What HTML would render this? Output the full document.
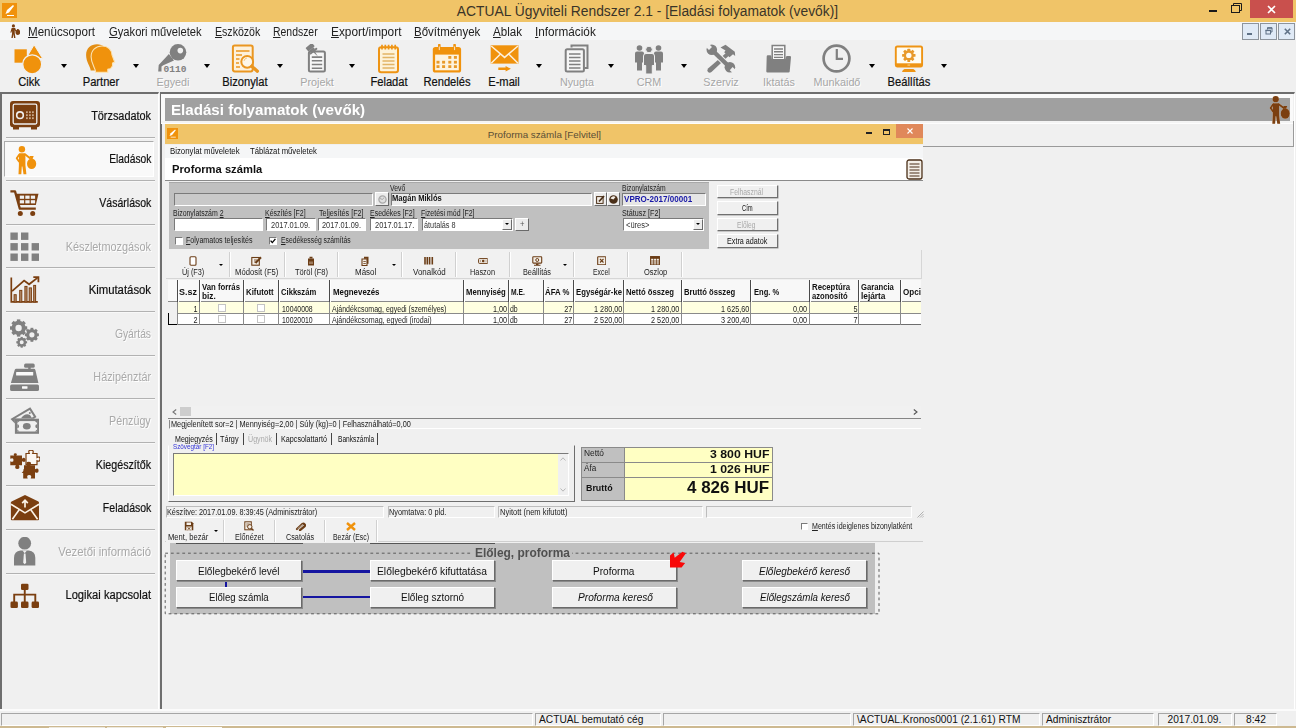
<!DOCTYPE html>
<html><head><meta charset="utf-8"><title>ACTUAL</title>
<style>
*{box-sizing:border-box;margin:0;padding:0}
html,body{width:1296px;height:728px;overflow:hidden;background:#f0f0f0;font-family:"Liberation Sans",sans-serif;color:#000}
.a{position:absolute;white-space:nowrap}
.sx{display:inline-block;transform:scaleX(.91);transform-origin:0 50%}
#title{left:0;top:0;width:1296px;height:21.6px;background:#f0c468}
#title .t{left:0;width:1296px;top:0px;text-align:center;font-size:15.4px;color:#3a3428;line-height:21px;transform:translateX(-.5px) scaleX(.898)}
#menu{left:0;top:21.5px;width:1296px;height:18px;background:#f5f6f7;z-index:2}
#menu span{position:absolute;top:3px;font-size:12.3px;line-height:15px;color:#222;transform:scaleX(.91);transform-origin:0 50%}
#tb{left:0;top:39px;width:1296px;height:53px;background:#f0f0f0}
.tl{position:absolute;top:36px;font-size:12px;line-height:14px;text-align:center;transform:translateX(-50%) scaleX(.93);color:#111;-webkit-text-stroke:.2px #111}
.tl.d{font-size:11.6px;color:#a6a6a6;-webkit-text-stroke:0;text-shadow:1px 1px 0 #fff}
.arr{position:absolute;top:25.2px;width:0;height:0;margin-left:-.3px;border-left:3.8px solid transparent;border-right:3.8px solid transparent;border-top:4.3px solid #000}
.ico{position:absolute;top:5px;width:30px;height:30px}
#side{left:0;top:92px;width:159px;height:616.5px;background:#f0f0f0;border-top:2px solid #6e6e6e;border-left:2px solid #6e6e6e;border-right:1px solid #fff}
.sl{position:absolute;right:1145px;font-size:12px;line-height:16px;color:#111;transform:scaleX(.90);transform-origin:100% 50%;-webkit-text-stroke:.2px #111}
.sl.d{color:#a9a9a9;-webkit-text-stroke:0;text-shadow:1px 1px 0 #fff}
.sep{position:absolute;left:6px;width:149px;height:2px;border-top:1px solid #b2b2b2;border-bottom:1px solid #f8f8f8}
.sic{position:absolute;left:10px;width:30px;height:30px}
#main{left:159.5px;top:92px;width:1135px;height:616.5px;border-right:1px solid #fff;background:#f0f0f0;border-top:2px solid #6e6e6e;border-left:2px solid #6e6e6e}
#hdr{left:165.1px;top:97.9px;width:1124.7px;height:23px;background:#a0a0a0}
#hdr .t{left:6.4px;top:.7px;font-size:14.6px;font-weight:bold;color:#fff;line-height:22.6px;transform:scaleX(1.036);transform-origin:0 50%}
#status{left:0;top:712px;width:1296px;height:14px}
.sp{position:absolute;top:.6px;height:13.4px;border:1px solid #a6a6a6;border-right-color:#fff;border-bottom-color:#fff;font-size:10.2px;line-height:11.6px;padding-left:3px;color:#111}
.sp span{display:inline-block;transform:scaleX(1.0);transform-origin:0 50%}
.mdi{top:1.7px;width:16.5px;height:16.5px;background:#e0eaf6;border:1px solid #8d949c}
#botline{left:0;top:725.5px;width:1296px;height:2.5px;background:#cdb991}
</style></head><body>
<!-- TITLE BAR -->
<div id="title" class="a">
  <div class="a t">ACTUAL Ügyviteli Rendszer 2.1 - [Eladási folyamatok (vevők)]</div>
  <svg class="a" style="left:2px;top:3px" width="15" height="15" viewBox="0 0 15 15"><rect width="15" height="15" fill="#f0920c"/><path d="M3.5 11 L5 7 L11 2 L12 3 L7 9.5 Z" fill="#fff"/><path d="M5 12.5 h7" stroke="#fff" stroke-width="1"/></svg>
  <div class="a" style="left:1209px;top:10px;width:8px;height:2px;background:#1a1a1a"></div>
  <svg class="a" style="left:1231px;top:3px" width="11" height="10" viewBox="0 0 11 10"><path d="M2.5 2.5 V0.5 H10.5 V7.5 H8.5" fill="none" stroke="#1a1a1a"/><rect x="0.5" y="2.5" width="8" height="7" fill="none" stroke="#1a1a1a"/></svg>
  <div class="a" style="left:1250px;top:0;width:43px;height:18px;background:#c9504d"></div>
  <svg class="a" style="left:1267px;top:5px" width="9" height="9" viewBox="0 0 9 9"><path d="M1 1 L8 8 M8 1 L1 8" stroke="#fff" stroke-width="1.6"/></svg>
</div>
<!-- MENU -->
<div id="menu" class="a">
  <svg class="a" style="left:8.600px;top:2px" width="11.500" height="14.200" viewBox="0 0 13 16"><g fill="#7b3f10"><circle cx="5" cy="2.2" r="1.8"/><path d="M3 4.5h4l1.2 3.5l-1 .5l-.7-1.6v3.6l.8 5.3h-1.6l-.7-4.6l-.7 4.6h-1.6l.8-5.3v-3l-1 2.5l-1-.4z"/><ellipse cx="10" cy="9.3" rx="2.6" ry="3"/><path d="M9 5.5h2l-.4 1.5h-1.2z"/></g></svg>
  <span style="left:28px;transform:scaleX(0.942)"><u>M</u>enücsoport</span>
  <span style="left:109px;transform:scaleX(0.91)"><u>G</u>yakori műveletek</span>
  <span style="left:215px;transform:scaleX(0.86)"><u>E</u>szközök</span>
  <span style="left:273px;transform:scaleX(0.848)"><u>R</u>endszer</span>
  <span style="left:331px;transform:scaleX(0.963)"><u>E</u>xport/import</span>
  <span style="left:414px;transform:scaleX(0.933)"><u>B</u>ővítmények</span>
  <span style="left:493px;transform:scaleX(0.942)"><u>A</u>blak</span>
  <span style="left:535px;transform:scaleX(0.956)"><u>I</u>nformációk</span>
  <div class="a mdi" style="left:1242.200px"></div><div class="a mdi" style="left:1260.300px"></div><div class="a mdi" style="left:1278.200px"></div>
  <div class="a" style="left:1246.600px;top:11.500px;width:5.600px;height:1.900px;background:#5f7186"></div>
  <svg class="a" style="left:1264.500px;top:5.500px" width="8" height="8" viewBox="0 0 8 8"><path d="M2.500 2.500 V1 H7 V5 H5.500" fill="none" stroke="#5f7186" stroke-width="1"/><path d="M2.200 .9 H7.200" stroke="#5f7186" stroke-width="1.400"/><rect x="1" y="3.500" width="4.500" height="3.500" fill="none" stroke="#5f7186" stroke-width="1"/><path d="M.5 3.400 H6" stroke="#5f7186" stroke-width="1.400"/></svg>
  <svg class="a" style="left:1283.500px;top:6.800px" width="7" height="7" viewBox="0 0 7 7"><path d="M.8 .8 L6.200 6.200 M6.200 .8 L.8 6.200" stroke="#5f7186" stroke-width="1.600"/></svg>
</div>
<!-- TOOLBAR -->
<div id="tb" class="a">
  <!-- Cikk -->
  <svg class="ico" style="left:14px" viewBox="0 0 30 30"><g fill="#f0920c"><rect x=".5" y="5.300" width="12.300" height="13.400"/><path d="M20.100 .8 L28.600 14.500 H12 Z" stroke="#f0f0f0" stroke-width="1"/><circle cx="18.200" cy="20.300" r="9.500" stroke="#f0f0f0" stroke-width="1.300"/></g></svg>
  <div class="tl" style="left:29px">Cikk</div><div class="arr" style="left:61px"></div>
  <!-- Partner -->
  <svg class="ico" style="left:86px" viewBox="0 0 30 30"><path d="M9.700 28.400 C9.500 24 5.100 20 5.100 12.700 C5.100 6 10 2 16 2 C22 2 26 6 26 11 L28.700 18 L26.500 19.200 L26.500 22 L24.600 24.600 C23.500 25.300 21.800 25 21.800 25.200 L21.800 28.400 Z" fill="#e38d12" transform="translate(-5 -1.800)"/><path d="M9.700 28.400 C9.500 24 5.100 20 5.100 12.700 C5.100 6 10 2 16 2 C22 2 26 6 26 11 L28.700 18 L26.500 19.200 L26.500 22 L24.600 24.600 C23.500 25.300 21.800 25 21.800 25.200 L21.800 28.400 Z" fill="#f0920c" stroke="#fbe3b5" stroke-width="1.100"/></svg>
  <div class="tl" style="left:101px">Partner</div><div class="arr" style="left:133px"></div>
  <!-- Egyedi -->
  <svg class="ico" style="left:157px" viewBox="0 0 30 30"><g fill="#808080"><circle cx="21" cy="8.300" r="8.300"/><path d="M11.900 9.900 L1.700 21 L1.200 27.500 L4.500 27.500 L4.500 22.500 L6.300 21.300 L17 16.500 Z"/></g><circle cx="23.300" cy="6.600" r="2.800" fill="#f0f0f0"/><text x="6.600" y="27.900" font-family="Liberation Mono,monospace" font-size="9.800" font-weight="bold" fill="#808080" textLength="23" lengthAdjust="spacingAndGlyphs">0110</text></svg>
  <div class="tl d" style="left:173px">Egyedi</div><div class="arr" style="left:204.500px"></div>
  <!-- Bizonylat -->
  <svg class="ico" style="left:230px" viewBox="0 0 30 30"><rect x="2.900" y="1.600" width="19.800" height="25.800" rx="1.800" fill="#fdf1dc" stroke="#ea9620" stroke-width="2"/><path d="M6 7h13.500 M6 11h6 M6 15h3.500 M6 19h3 M6 23h4" stroke="#ea9620" stroke-width="1.500"/><circle cx="17.200" cy="17.800" r="5.900" fill="#fdf6e8" stroke="#ea9620" stroke-width="2"/><path d="M14 17 a3.500 3.500 0 0 1 3-3" fill="none" stroke="#f3c98a" stroke-width="1"/><path d="M21.800 22.300 L27.400 27.300" stroke="#ea9620" stroke-width="3.200" stroke-linecap="round"/></svg>
  <div class="tl" style="left:245px">Bizonylat</div><div class="arr" style="left:277px"></div>
  <!-- Projekt -->
  <svg class="ico" style="left:302px" viewBox="0 0 30 30"><rect x="6.900" y="7.600" width="16" height="19.800" rx="1.500" fill="#f7f7f7" stroke="#808080" stroke-width="2"/><path d="M9.800 13.100h10.400 M9.800 16.800h10.400 M9.800 20.500h10.400 M9.800 24.200h10.400" stroke="#808080" stroke-width="1.600"/><g fill="#808080" transform="rotate(-40 10.500 6)"><rect x="6.300" y="0" width="8.400" height="4.600" rx="1"/><rect x="8" y="4.400" width="5" height="2.400"/><rect x="5.800" y="6.500" width="9.400" height="2" rx=".9"/><path d="M9.600 8.300 L11.400 8.300 L10.500 14.500 Z"/></g></svg>
  <div class="tl d" style="left:317px">Projekt</div><div class="arr" style="left:349px"></div>
  <!-- Feladat -->
  <svg class="ico" style="left:374px" viewBox="0 0 30 30"><rect x="5" y="3.300" width="19" height="25" rx="2.200" fill="#fdf3da" stroke="#ee9414" stroke-width="2"/><path d="M8.500 10h12 M8.500 13.500h12 M8.500 17h12 M8.500 20.500h12 M8.500 24h12" stroke="#e2b566" stroke-width="1.300"/><path d="M8 .8v4.800 M11.300 .8v4.800 M14.600 .8v4.800 M17.900 .8v4.800 M21.200 .8v4.800" stroke="#ee9414" stroke-width="1.700"/></svg>
  <div class="tl" style="left:389px">Feladat</div>
  <!-- Rendeles -->
  <svg class="ico" style="left:432px" viewBox="0 0 30 30"><rect x=".8" y="3" width="28.300" height="25.600" rx="2.600" fill="#f0920c"/><rect x="3.100" y="10.600" width="23.700" height="15.700" fill="#fdf3e0"/><g fill="#e89a2a"><rect x="16.3" y="12" width="3" height="2.800"/><rect x="21.9" y="12" width="3" height="2.800"/><rect x="4.5" y="16.8" width="3" height="2.800"/><rect x="10.1" y="16.8" width="3" height="2.800"/><rect x="16.3" y="16.8" width="3" height="2.800"/><rect x="21.9" y="16.8" width="3" height="2.800"/><rect x="4.5" y="21.2" width="3" height="2.800"/><rect x="10.1" y="21.2" width="3" height="2.800"/><rect x="16.3" y="21.2" width="3" height="2.800"/><rect x="21.9" y="21.2" width="3" height="2.800"/></g><path d="M7.300 1v5.500 M22.600 1v5.500" stroke="#f0920c" stroke-width="2.600" stroke-linecap="round"/><path d="M7.300 2.500v3.600 M22.600 2.500v3.600" stroke="#fdf0dc" stroke-width=".9"/></svg>
  <div class="tl" style="left:447px">Rendelés</div>
  <!-- Email -->
  <svg class="ico" style="left:489px" viewBox="0 0 30 30"><rect x="1.700" y="1.300" width="27.800" height="18.300" fill="#f0920c"/><path d="M2.200 2 L15.600 13.400 L29 2 M2.200 19.200 L11.500 10 M29 19.200 L19.700 10" fill="none" stroke="#fdf0dc" stroke-width="1.500"/><path d="M9.300 23.600h7.300v-1.500l5.300 2.750l-5.300 2.750v-1.500h-7.300z" fill="#f0920c"/></svg>
  <div class="tl" style="left:504px">E-mail</div><div class="arr" style="left:536px"></div>
  <!-- Nyugta -->
  <svg class="ico" style="left:562px" viewBox="0 0 30 30"><path d="M9.500 3.500 V1.500 H25.500 V24 H22.500" fill="none" stroke="#808080" stroke-width="2"/><rect x="3.700" y="5.300" width="18.200" height="22.300" rx="1.500" fill="#f6f6f6" stroke="#808080" stroke-width="2"/><path d="M7 10h11.500 M7 13.500h11.500 M7 17h11.500 M7 20.500h11.500 M7 24h11.500" stroke="#808080" stroke-width="1.500"/></svg>
  <div class="tl d" style="left:577px">Nyugta</div><div class="arr" style="left:608.500px"></div>
  <!-- CRM -->
  <svg class="ico" style="left:634px" viewBox="0 0 30 30"><g fill="#808080"><circle cx="5.500" cy="4" r="2.800"/><circle cx="24.500" cy="4" r="2.800"/><path d="M1 9.500 q0-2 2-2 h5 q2 0 2 2 v9 h-2 v8 h-5 v-8 h-2z"/><path d="M20 9.500 q0-2 2-2 h5 q2 0 2 2 v9 h-2 v8 h-5 v-8 h-2z"/><circle cx="15" cy="5.500" r="3.300" stroke="#f0f0f0" stroke-width="1"/><path d="M9.500 12 q0-2.500 2.500-2.500 h6 q2.500 0 2.500 2.500 v9.500 h-2.200 v8.500 h-6.600 v-8.500 h-2.200z" stroke="#f0f0f0" stroke-width="1"/></g></svg>
  <div class="tl d" style="left:649px">CRM</div><div class="arr" style="left:681px"></div>
  <!-- Szerviz -->
  <svg class="ico" style="left:706px" viewBox="0 0 30 30"><g fill="#808080"><path d="M20 9 L23 11.500 L5.500 28 Q3.500 29.500 2 28 Q.5 26.500 2 24.500 Z"/><path d="M14.500 3.500 L19.500 .8 L28.800 7.800 L29.200 12 L27 10.300 L23.500 13.200 L18.200 8.200 L19.500 6.500 Z"/></g><path d="M6 6 L24 23.500" stroke="#f0f0f0" stroke-width="6.400"/><path d="M6 6 L24 23.500" stroke="#808080" stroke-width="4.400"/><g fill="#808080"><circle cx="5.800" cy="5.700" r="5.300"/><circle cx="23.900" cy="23.300" r="5.300"/></g><path d="M4.500 4.500 L-1 -1 M25.200 24.600 L31 30" stroke="#f0f0f0" stroke-width="4.200"/></svg>
  <div class="tl d" style="left:721px">Szerviz</div>
  <!-- Iktatas -->
  <svg class="ico" style="left:764px" viewBox="0 0 30 30"><rect x="8.200" y="1.500" width="12.600" height="15" fill="#f7f7f7" stroke="#808080" stroke-width="1.500"/><path d="M10 5h9 M10 7.800h9 M10 10.600h9 M10 13.400h9" stroke="#808080" stroke-width="1.400"/><path d="M2.700 12.500 q0-1.200 1.200-1.200 h2.300 q1 0 1.200 1.200 l.3 2.500 h13.800 l.4-2 q.2-1 1.200-1 h2.800 q1.200 0 1.100 1.200 l-1.300 14.400 q-.1 1-1.200 1 h-21 q-1.100 0-1.200-1z" fill="#808080"/></svg>
  <div class="tl d" style="left:779px">Iktatás</div>
  <!-- Munkaido -->
  <svg class="ico" style="left:822px" viewBox="0 0 30 30"><circle cx="14.500" cy="14.500" r="12.900" fill="none" stroke="#808080" stroke-width="2.700"/><path d="M14.800 5 V14.800 H21" fill="none" stroke="#808080" stroke-width="2.200"/></svg>
  <div class="tl d" style="left:837px">Munkaidő</div><div class="arr" style="left:869px"></div>
  <!-- Beallitas -->
  <svg class="ico" style="left:894px" viewBox="0 0 30 30"><rect x="1.800" y="2.450" width="26.300" height="20" rx="1.600" fill="#fffcf2" stroke="#ee9414" stroke-width="1.900"/><rect x="1.800" y="19.300" width="26.300" height="3.600" fill="#ee9414"/><rect x="13.500" y="20.600" width="2.600" height=".9" fill="#fbd9a0"/><path d="M10.500 24.900 h8.800 q2.300 1.200 2.500 3 h-13.800 q.2-1.800 2.500-3z" fill="#ee9414"/><g transform="translate(14.800 11.400)" fill="#e89a2a"><rect x="-1.400" y="-6.700" width="2.800" height="3" rx=".5" transform="rotate(0)"/><rect x="-1.400" y="-6.700" width="2.800" height="3" rx=".5" transform="rotate(45)"/><rect x="-1.400" y="-6.700" width="2.800" height="3" rx=".5" transform="rotate(90)"/><rect x="-1.400" y="-6.700" width="2.800" height="3" rx=".5" transform="rotate(135)"/><rect x="-1.400" y="-6.700" width="2.800" height="3" rx=".5" transform="rotate(180)"/><rect x="-1.400" y="-6.700" width="2.800" height="3" rx=".5" transform="rotate(225)"/><rect x="-1.400" y="-6.700" width="2.800" height="3" rx=".5" transform="rotate(270)"/><rect x="-1.400" y="-6.700" width="2.800" height="3" rx=".5" transform="rotate(315)"/><circle r="5.100"/><circle r="2.700" fill="#fffcf2"/></g></svg>
  <div class="tl" style="left:909px">Beállítás</div><div class="arr" style="left:941px"></div>
</div>
<!-- SIDEBAR -->
<div id="side" class="a"></div>
<div class="a" style="left:4px;top:141px;width:150px;height:36px;background:#f9f9f9;border:1px solid #ababab;border-right-color:#fff;border-bottom-color:#fff"></div>
<svg class="sic" style="top:101.0px" viewBox="0 0 30 30"><rect x="0" y="0" width="30" height="26.200" rx="3" fill="#7b3f10"/><rect x="3.200" y="3.200" width="23.600" height="19.800" rx="1.500" fill="none" stroke="#f0f0f0" stroke-width="1.300"/><circle cx="10" cy="14.200" r="3.300" fill="none" stroke="#f0f0f0" stroke-width="1.600"/><g fill="#c9a98a"><rect x="16" y="10.300" width="1.800" height="1.800"/><rect x="19" y="10.300" width="1.800" height="1.800"/><rect x="22" y="10.300" width="1.800" height="1.800"/><rect x="16" y="13.300" width="1.800" height="1.800"/><rect x="19" y="13.300" width="1.800" height="1.800"/><rect x="22" y="13.300" width="1.800" height="1.800"/><rect x="16" y="16.300" width="1.800" height="1.800"/><rect x="19" y="16.300" width="1.800" height="1.800"/><rect x="22" y="16.300" width="1.800" height="1.800"/></g><path d="M3 26h6v2.600h-6z M21 26h6v2.600h-6z" fill="#7b3f10"/></svg>
<div class="sl" style="top:107.7px;transform:scaleX(0.907)">Törzsadatok</div>
<div class="sep" style="top:136.5px"></div>
<svg class="sic" style="top:144.6px" viewBox="0 0 30 30"><g fill="#f0920c"><circle cx="11.900" cy="4.200" r="3.200"/><path d="M9.900 8.300 H14.300 Q15.400 8.300 15.400 9.500 V20 L16.400 29.300 H13.500 L12.400 21.500 H11.800 L11.300 29.300 H8.500 L8.900 20 V9.500 Q8.900 8.300 9.900 8.300 Z"/><path d="M9.300 9.400 L6.700 13.200 L9 16.600" fill="none" stroke="#f0920c" stroke-width="1.800" stroke-linejoin="round" stroke-linecap="round"/><path d="M15 9.300 L20 13.200" fill="none" stroke="#f0920c" stroke-width="1.900" stroke-linecap="round"/><ellipse cx="21.600" cy="18.800" rx="4.600" ry="5.300"/><path d="M19.500 11.100 h4.200 l-1.100 3 h-2 z"/></g></svg>
<div class="sl" style="top:151.3px;transform:scaleX(0.853)">Eladások</div>
<div class="sep" style="top:180.1px"></div>
<svg class="sic" style="top:188.2px" viewBox="0 0 30 30"><path d="M.4 3.400 h4.600 l4.800 17.200 h16" fill="none" stroke="#7b3f10" stroke-width="2.300" stroke-linejoin="round"/><path d="M5.800 5.800 h22.700 l-2.700 11.200 h-16.800z" fill="#7b3f10"/><g fill="#f0f0f0"><rect x="9.8" y="7.6" width="4.300" height="3.200"/><rect x="15.3" y="7.6" width="4.300" height="3.200"/><rect x="20.8" y="7.6" width="4.300" height="3.200"/><rect x="9.8" y="12.2" width="4.300" height="3.200"/><rect x="15.3" y="12.2" width="4.300" height="3.200"/><rect x="20.8" y="12.2" width="4.300" height="3.200"/></g><circle cx="10.300" cy="25.600" r="2.500" fill="#7b3f10"/><circle cx="22.700" cy="25.600" r="2.500" fill="#7b3f10"/></svg>
<div class="sl" style="top:194.9px;transform:scaleX(0.876)">Vásárlások</div>
<div class="sep" style="top:223.7px"></div>
<svg class="sic" style="top:231.8px" viewBox="0 0 30 30"><g fill="#808080"><rect x="0.4" y="0.5" width="7.400" height="7.400"/><rect x="11" y="0.5" width="7.400" height="7.400"/><rect x="0.4" y="11.1" width="7.400" height="7.400"/><rect x="11" y="11.1" width="7.400" height="7.400"/><rect x="21.6" y="11.1" width="7.400" height="7.400"/><rect x="0.4" y="21.5" width="7.400" height="7.400"/><rect x="11" y="21.5" width="7.400" height="7.400"/><rect x="21.6" y="21.5" width="7.400" height="7.400"/></g></svg>
<div class="sl d" style="top:238.5px;transform:scaleX(0.908)">Készletmozgások</div>
<div class="sep" style="top:267.3px"></div>
<svg class="sic" style="top:275.4px" viewBox="0 0 30 30"><g fill="none" stroke="#7b3f10"><path d="M1.300 2.500 V26.800 H27.800" stroke-width="1.700"/><rect x="4.1" y="19.7" width="2.1" height="7.3" fill="#b79070" stroke="#7b3f10" stroke-width="1"/><rect x="9.7" y="15.4" width="2.1" height="11.6" fill="#b79070" stroke="#7b3f10" stroke-width="1"/><rect x="14.9" y="11.4" width="2.1" height="15.6" fill="#b79070" stroke="#7b3f10" stroke-width="1"/><rect x="19.2" y="12.9" width="2.2" height="14.1" fill="#b79070" stroke="#7b3f10" stroke-width="1"/><rect x="23.7" y="10.4" width="1.9" height="16.6" fill="#b79070" stroke="#7b3f10" stroke-width="1"/><path d="M2.100 16.100 L14.100 5.600 L19.100 9.300 L27.400 2.900" stroke-width="1.800"/><path d="M23.300 2.200 H28.400 V7.200" stroke-width="1.800"/></g></svg>
<div class="sl" style="top:282.1px;transform:scaleX(0.945)">Kimutatások</div>
<div class="sep" style="top:310.9px"></div>
<svg class="sic" style="top:319.0px" viewBox="0 0 30 30"><g transform="translate(8.6 9)"><circle r="5.16" fill="none" stroke="#808080" stroke-width="3.96"/><rect x="-1.72" y="-8.60" width="3.44" height="3.01" fill="#808080" transform="rotate(0.0)"/><rect x="-1.72" y="-8.60" width="3.44" height="3.01" fill="#808080" transform="rotate(45.0)"/><rect x="-1.72" y="-8.60" width="3.44" height="3.01" fill="#808080" transform="rotate(90.0)"/><rect x="-1.72" y="-8.60" width="3.44" height="3.01" fill="#808080" transform="rotate(135.0)"/><rect x="-1.72" y="-8.60" width="3.44" height="3.01" fill="#808080" transform="rotate(180.0)"/><rect x="-1.72" y="-8.60" width="3.44" height="3.01" fill="#808080" transform="rotate(225.0)"/><rect x="-1.72" y="-8.60" width="3.44" height="3.01" fill="#808080" transform="rotate(270.0)"/><rect x="-1.72" y="-8.60" width="3.44" height="3.01" fill="#808080" transform="rotate(315.0)"/></g><g transform="translate(21.9 15.8)"><circle r="4.20" fill="none" stroke="#808080" stroke-width="3.22"/><rect x="-1.40" y="-7.00" width="2.80" height="2.45" fill="#808080" transform="rotate(0.0)"/><rect x="-1.40" y="-7.00" width="2.80" height="2.45" fill="#808080" transform="rotate(45.0)"/><rect x="-1.40" y="-7.00" width="2.80" height="2.45" fill="#808080" transform="rotate(90.0)"/><rect x="-1.40" y="-7.00" width="2.80" height="2.45" fill="#808080" transform="rotate(135.0)"/><rect x="-1.40" y="-7.00" width="2.80" height="2.45" fill="#808080" transform="rotate(180.0)"/><rect x="-1.40" y="-7.00" width="2.80" height="2.45" fill="#808080" transform="rotate(225.0)"/><rect x="-1.40" y="-7.00" width="2.80" height="2.45" fill="#808080" transform="rotate(270.0)"/><rect x="-1.40" y="-7.00" width="2.80" height="2.45" fill="#808080" transform="rotate(315.0)"/></g><g transform="translate(11.7 23.3)"><circle r="3.24" fill="none" stroke="#808080" stroke-width="2.48"/><rect x="-1.08" y="-5.40" width="2.16" height="1.89" fill="#808080" transform="rotate(0.0)"/><rect x="-1.08" y="-5.40" width="2.16" height="1.89" fill="#808080" transform="rotate(45.0)"/><rect x="-1.08" y="-5.40" width="2.16" height="1.89" fill="#808080" transform="rotate(90.0)"/><rect x="-1.08" y="-5.40" width="2.16" height="1.89" fill="#808080" transform="rotate(135.0)"/><rect x="-1.08" y="-5.40" width="2.16" height="1.89" fill="#808080" transform="rotate(180.0)"/><rect x="-1.08" y="-5.40" width="2.16" height="1.89" fill="#808080" transform="rotate(225.0)"/><rect x="-1.08" y="-5.40" width="2.16" height="1.89" fill="#808080" transform="rotate(270.0)"/><rect x="-1.08" y="-5.40" width="2.16" height="1.89" fill="#808080" transform="rotate(315.0)"/></g></svg>
<div class="sl d" style="top:325.7px;transform:scaleX(0.859)">Gyártás</div>
<div class="sep" style="top:354.5px"></div>
<svg class="sic" style="top:362.6px" viewBox="0 0 30 30"><g fill="#808080"><rect x="14.100" y=".6" width="10.600" height="4.200" rx="1.500"/><rect x="18.200" y="4" width="2.500" height="3"/><path d="M6.300 5.800 h17.600 q1.200 0 1.500 1.200 l3 13 h-27.500 l3.800-13 q.4-1.200 1.600-1.200z"/><rect x=".1" y="21.600" width="28.900" height="6.400" rx="1.600"/></g><rect x="6.100" y="8.900" width="17.100" height="3.700" rx=".6" fill="#fafafa"/><rect x="12" y="23.200" width="5.500" height="2.500" rx=".4" fill="#fafafa"/></svg>
<div class="sl d" style="top:369.3px;transform:scaleX(0.901)">Házipénztár</div>
<div class="sep" style="top:398.1px"></div>
<svg class="sic" style="top:406.2px" viewBox="0 0 30 30"><g fill="#808080"><path d="M.5 12.900 L20.300 1.200 L26.500 11.100 L24 12.700 H4.900 V17.500 Z"/><path d="M4.900 12.700 h24.100 v15.100 h-24.100z"/></g><path d="M5.500 12.200 L19.600 3.900 L23.800 10.600 L21 12.200 Z" fill="#f0f0f0"/><path d="M11 12.200 q4-5.500 9-3.300 l2 3.300z" fill="#808080"/><circle cx="19.800" cy="6.900" r="1" fill="#808080"/><path d="M7.300 15.100 h19.800 v10.400 h-19.800z" fill="#f0f0f0"/><g fill="#808080"><path d="M7.300 18.300 q1.800 0 1.800 2 q0 2-1.800 2z M27.100 18.300 q-1.800 0-1.800 2 q0 2 1.800 2z"/></g><ellipse cx="16.800" cy="20.300" rx="3.900" ry="3.300" fill="#808080"/><path d="M7.300 15.100 h2.200 l-2.200 2z M27.100 15.100 h-2.200 l2.200 2z M7.300 25.500 h2.200 l-2.200-2z M27.100 25.500 h-2.200 l2.200-2z" fill="#808080"/></svg>
<div class="sl d" style="top:412.9px;transform:scaleX(0.891)">Pénzügy</div>
<div class="sep" style="top:441.7px"></div>
<svg class="sic" style="top:449.8px" viewBox="0 0 30 30"><path d="M16 3.500 h3.300 q-1.600-3.300 1.700-3.300 q3.300 0 1.700 3.300 h4.300 v4 q3-1.500 3 1.600 q0 3.100-3 1.600 v4 h-11 z" fill="#fbf7f2" stroke="#7b3f10" stroke-width="1.200"/><g fill="#7b3f10"><path d="M.3 5.500 h4 q-1.500-1.800 1-2.200 q2.500 .4 1 2.200 h5.700 v3.200 q2.500-2 3.600 .8 q.3 3.600-3.600 1.800 v4 h-3.200 q1.800 3.600-1.500 3.600 q-3.300 0-1.500-3.600 h-5.500 v-4 q3.200 1.600 3.200-1.300 q0-2.900-3.200-1.300z"/><path d="M14 15.200 h3 q-1.800-3.400 1.700-3.400 q3.500 0 1.700 3.400 h4.600 v4 q3.600-1.800 3.600 1.500 q0 3.300-3.600 1.500 v6.300 h-4.300 q1.600-3.600-1.500-3.600 q-3.100 0-1.500 3.600 h-4.500 v-5.500 h-1.500 q2.500-1.500 1.700-3.800 h.6z"/></g></svg>
<div class="sl" style="top:456.5px;transform:scaleX(0.890)">Kiegészítők</div>
<div class="sep" style="top:485.3px"></div>
<svg class="sic" style="top:493.4px" viewBox="0 0 30 30"><path d="M.9 9.600 Q.9 8.800 1.600 8.400 L15 1.900 L28.400 8.400 Q29 8.800 29 9.600 V26.300 Q29 27.300 28 27.300 H1.900 Q.9 27.300 .9 26.300z" fill="#7b3f10"/><path d="M1 11.200 L15 19.900 L29 11.200 M2.400 26.300 L9 17 M27.600 26.300 L21 17" fill="none" stroke="#fbf3e6" stroke-width="1.600"/><path d="M15 14.500 V8 M12.200 10.200 L15 7.200 L17.800 10.200" fill="none" stroke="#fbf3e6" stroke-width="1.700"/></svg>
<div class="sl" style="top:500.1px;transform:scaleX(0.876)">Feladások</div>
<div class="sep" style="top:528.9px"></div>
<svg class="sic" style="top:537.0px" viewBox="0 0 30 30"><g fill="#808080"><circle cx="14.700" cy="6.200" r="6.400"/><path d="M4 28.400 v-7.500 q0-6.300 6.500-7.300 h8.300 q6.500 1 6.500 7.300 v7.500z"/></g><path d="M12.500 13.600 h4.400 l-2.200 2.600z" fill="#f0f0f0"/><path d="M13.900 16.600 h1.600 l.7 9.200 l-1.500 1.400 l-1.500-1.400z" fill="#f0f0f0"/></svg>
<div class="sl d" style="top:543.7px;transform:scaleX(0.946)">Vezetői információ</div>
<div class="sep" style="top:572.5px"></div>
<svg class="sic" style="top:580.6px" viewBox="0 0 30 30"><g fill="#7b3f10"><rect x="11" y="2.800" width="7.500" height="6.300" rx="1.300"/><rect x=".5" y="20.600" width="7.400" height="6.400" rx="1.300"/><rect x="11" y="20.600" width="7.500" height="6.400" rx="1.300"/><rect x="21.600" y="20.600" width="7.400" height="6.400" rx="1.300"/></g><path d="M14.750 8.500 V21 M4.200 21 V13.600 H25.300 V21" fill="none" stroke="#7b3f10" stroke-width="1.900"/></svg>
<div class="sl" style="top:587.3px;transform:scaleX(0.930)">Logikai kapcsolat</div>
<!-- MAIN -->
<div id="main" class="a"></div>
<div class="a" style="left:161.300px;top:93.800px;width:1131.800px;height:30.600px;background:#fafafa"></div>
<div class="a" style="left:161.300px;top:121px;width:1131.800px;height:3.300px;background:#f4f4f4;border-bottom:1px solid #fdfdfd"></div>
<div id="hdr" class="a"><div class="a t">Eladási folyamatok (vevők)</div></div>
<svg class="a" style="left:1264.300px;top:94.500px;filter:drop-shadow(0 0 .6px #f6e6d0)" width="29.500" height="29.500" viewBox="0 0 30 30"><g fill="#7b3f10"><circle cx="11.900" cy="4.200" r="3.200"/><path d="M9.900 8.300 H14.300 Q15.400 8.300 15.400 9.500 V20 L16.400 29.300 H13.500 L12.400 21.500 H11.800 L11.300 29.300 H8.500 L8.900 20 V9.500 Q8.900 8.300 9.900 8.300 Z"/><path d="M9.300 9.400 L6.700 13.200 L9 16.600" fill="none" stroke="#7b3f10" stroke-width="1.800" stroke-linejoin="round" stroke-linecap="round"/><path d="M15 9.300 L20 13.200" fill="none" stroke="#7b3f10" stroke-width="1.900" stroke-linecap="round"/><ellipse cx="21.600" cy="18.800" rx="4.600" ry="5.300"/><path d="M19.500 11.100 h4.200 l-1.100 3 h-2 z"/></g></svg>
<!-- INNER WINDOW -->
<div class="a" style="left:165.0px;top:124.4px;width:758.2px;height:20.1px;background:#f0c468;"></div>
<svg class="a" style="left:167px;top:128px" width="11" height="11" viewBox="0 0 15 15"><rect width="15" height="15" fill="#f0920c"/><path d="M3.500 11 L5 7 L11 2 L12 3 L7 9.500 Z" fill="#fff"/><path d="M5 12.500 h7" stroke="#fff" stroke-width="1"/></svg>
<div class="a" style="left:487.8px;top:130.3px;font-size:9.8px;line-height:9.8px;color:#5a4e36;transform:scaleX(1.000);transform-origin:0 50%">Proforma számla [Felvitel]</div>
<div class="a" style="left:866.0px;top:132.3px;width:6.0px;height:1.7px;background:#222;"></div>
<div class="a" style="left:883.3px;top:129.0px;width:7.0px;height:5.6px;border:1px solid #222;border-top-width:2px;"></div>
<div class="a" style="left:895.7px;top:124.4px;width:27.5px;height:13.4px;background:#e0885a;"></div>
<svg class="a" style="left:906.500px;top:128px" width="6" height="6" viewBox="0 0 6 6"><path d="M.5 .5 L5.500 5.500 M5.500 .5 L.5 5.500" stroke="#fff" stroke-width="1.100"/></svg>
<div class="a" style="left:165.0px;top:144.5px;width:758.2px;height:13.5px;background:#f5f6f7;"></div>
<div class="a" style="left:170.2px;top:147.0px;font-size:8.3px;line-height:8.3px;color:#111;transform:scaleX(0.943);transform-origin:0 50%">Bizonylat műveletek</div>
<div class="a" style="left:249.6px;top:147.0px;font-size:8.3px;line-height:8.3px;color:#111;transform:scaleX(0.928);transform-origin:0 50%">Táblázat műveletek</div>
<div class="a" style="left:165.0px;top:158.0px;width:758.2px;height:22.6px;background:#fff;border-bottom:1px solid #8a8a8a;"></div>
<div class="a" style="left:172.4px;top:164.2px;font-size:10.6px;line-height:10.6px;color:#111;font-weight:bold;transform:scaleX(1.057);transform-origin:0 50%">Proforma számla</div>
<svg class="a" style="left:905.500px;top:158.500px" width="17" height="21" viewBox="0 0 17 21"><rect x="1" y="1" width="15" height="19" rx="2" fill="#f4efe8" stroke="#4a2f18" stroke-width="1.300"/><path d="M3.500 5h10M3.500 8h10M3.500 11h10M3.500 14h10M3.500 17h10" stroke="#4a2f18" stroke-width="1.200"/></svg>
<div class="a" style="left:165.0px;top:180.6px;width:758.2px;height:361.9px;background:#f0f0f0;border-bottom:1px solid #cfcfcf;"></div>
<div class="a" style="left:923.2px;top:121.0px;width:370.8px;height:25.5px;border-bottom:1px solid #9a9a9a;border-right:1px solid #9a9a9a;"></div>
<div class="a" style="left:169.0px;top:181.5px;width:540.3px;height:67.1px;background:#c0c0c0;border-top:1px solid #a8a8a8;"></div>
<div class="a" style="left:174.0px;top:193.3px;width:199.4px;height:13.0px;background:#c9c9c9;border:1px solid;border-color:#7a7a7a #fff #fff #7a7a7a;"></div>
<div class="a" style="left:375.4px;top:192.3px;width:13.4px;height:13.5px;background:#ececec;border:1px solid;border-color:#fff #6a6a6a #6a6a6a #fff;"></div>
<svg class="a" style="left:377.500px;top:194.500px" width="9" height="9" viewBox="0 0 9 9"><circle cx="4.500" cy="4.500" r="3.600" fill="#e0e0e0" stroke="#a8a8a8" stroke-width="1.300"/><path d="M4.500 4.500 L2 3.500 M4.500 4.500 L6 2.500" stroke="#a8a8a8" stroke-width="1"/></svg>
<div class="a" style="left:390.2px;top:183.8px;font-size:8.3px;line-height:8.3px;color:#222;transform:scaleX(0.829);transform-origin:0 50%">Vevő</div>
<div class="a" style="left:390.6px;top:193.2px;width:201.4px;height:12.6px;background:#ebebeb;border:1px solid;border-color:#7a7a7a #fff #fff #7a7a7a;"></div>
<div class="a" style="left:392.2px;top:194.3px;font-size:8.3px;line-height:8.3px;color:#111;font-weight:bold;transform:scaleX(0.915);transform-origin:0 50%">Magán Miklós</div>
<div class="a" style="left:594.0px;top:192.3px;width:12.5px;height:13.5px;background:#ececec;border:1px solid;border-color:#fff #6a6a6a #6a6a6a #fff;"></div>
<svg class="a" style="left:596px;top:194.500px" width="9" height="9" viewBox="0 0 9 9"><rect x=".6" y="1.600" width="6.500" height="6.800" fill="#f4efe8" stroke="#4a2f18" stroke-width="1"/><path d="M3 6.500 L8 1 " stroke="#4a2f18" stroke-width="1.800"/></svg>
<div class="a" style="left:607.0px;top:192.3px;width:12.5px;height:13.5px;background:#ececec;border:1px solid;border-color:#fff #6a6a6a #6a6a6a #fff;"></div>
<svg class="a" style="left:608.800px;top:194.500px" width="9" height="9" viewBox="0 0 9 9"><circle cx="4.500" cy="4.500" r="4.300" fill="#4a2f18"/><path d="M4.500 4.500 L1.500 3.500 A3.200 3.200 0 0 1 6.500 2 Z" fill="#f4efe8"/></svg>
<div class="a" style="left:622.3px;top:183.8px;font-size:8.3px;line-height:8.3px;color:#222;transform:scaleX(0.817);transform-origin:0 50%">Bizonylatszám</div>
<div class="a" style="left:622.3px;top:193.2px;width:83.5px;height:13.0px;background:#e6e6e6;border:1px solid;border-color:#7a7a7a #fff #fff #7a7a7a;"></div>
<div class="a" style="left:623.8px;top:195.1px;font-size:8.6px;line-height:8.6px;color:#1818a8;font-weight:bold;transform:scaleX(0.938);transform-origin:0 50%">VPRO-2017/00001</div>
<div class="a" style="left:173.4px;top:209.1px;font-size:8.3px;line-height:8.3px;color:#222;transform:scaleX(0.837);transform-origin:0 50%">Bizonylatszám <u>2</u></div>
<div class="a" style="left:265.4px;top:209.1px;font-size:8.3px;line-height:8.3px;color:#222;transform:scaleX(0.838);transform-origin:0 50%"><u>K</u>észítés [F2]</div>
<div class="a" style="left:318.6px;top:209.1px;font-size:8.3px;line-height:8.3px;color:#222;transform:scaleX(0.871);transform-origin:0 50%">Te<u>l</u>jesítés [F2]</div>
<div class="a" style="left:369.6px;top:209.1px;font-size:8.3px;line-height:8.3px;color:#222;transform:scaleX(0.841);transform-origin:0 50%"><u>E</u>sedékes [F2]</div>
<div class="a" style="left:421.2px;top:209.1px;font-size:8.3px;line-height:8.3px;color:#222;transform:scaleX(0.841);transform-origin:0 50%"><u>F</u>izetési mód [F2]</div>
<div class="a" style="left:622.3px;top:209.1px;font-size:8.3px;line-height:8.3px;color:#222;transform:scaleX(0.867);transform-origin:0 50%">Státusz [F2]</div>
<div class="a" style="left:174.0px;top:218.3px;width:89.0px;height:12.6px;background:#fff;border:1px solid;border-color:#7a7a7a #fff #fff #7a7a7a;"></div>
<div class="a" style="left:266.0px;top:218.3px;width:49.5px;height:12.6px;background:#fff;border:1px solid;border-color:#7a7a7a #fff #fff #7a7a7a;"></div>
<div class="a" style="left:270.8px;top:220.6px;font-size:8.3px;line-height:8.3px;color:#333;transform:scaleX(0.894);transform-origin:0 50%">2017.01.09.</div>
<div class="a" style="left:317.7px;top:218.3px;width:48.8px;height:12.6px;background:#fff;border:1px solid;border-color:#7a7a7a #fff #fff #7a7a7a;"></div>
<div class="a" style="left:322.3px;top:220.6px;font-size:8.3px;line-height:8.3px;color:#333;transform:scaleX(0.890);transform-origin:0 50%">2017.01.09.</div>
<div class="a" style="left:369.6px;top:218.3px;width:48.8px;height:12.6px;background:#fff;border:1px solid;border-color:#7a7a7a #fff #fff #7a7a7a;"></div>
<div class="a" style="left:374.5px;top:220.6px;font-size:8.3px;line-height:8.3px;color:#333;transform:scaleX(0.896);transform-origin:0 50%">2017.01.17.</div>
<div class="a" style="left:421.8px;top:218.3px;width:91.2px;height:12.6px;background:#fff;border:1px solid;border-color:#7a7a7a #fff #fff #7a7a7a;"></div>
<div class="a" style="left:423.6px;top:220.6px;font-size:8.3px;line-height:8.3px;color:#333;transform:scaleX(0.878);transform-origin:0 50%">átutalás 8</div>
<div class="a" style="left:502.0px;top:219.3px;width:10.0px;height:10.6px;background:#ececec;border:1px solid;border-color:#fff #6a6a6a #6a6a6a #fff;"></div>
<div class="a" style="left:504.800px;top:223.300px;border-left:2.200px solid transparent;border-right:2.200px solid transparent;border-top:2.600px solid #000"></div>
<div class="a" style="left:515.0px;top:218.0px;width:13.5px;height:12.9px;background:#ececec;border:1px solid;border-color:#fff #6a6a6a #6a6a6a #fff;"></div>
<div class="a" style="left:519.5px;top:220.3px;font-size:8.3px;line-height:8.3px;color:#555;transform:scaleX(0.926);transform-origin:0 50%">+</div>
<div class="a" style="left:622.7px;top:218.3px;width:81.3px;height:12.6px;background:#fff;border:1px solid;border-color:#7a7a7a #fff #fff #7a7a7a;"></div>
<div class="a" style="left:625.5px;top:220.6px;font-size:8.3px;line-height:8.3px;color:#333;transform:scaleX(0.909);transform-origin:0 50%">&lt;üres&gt;</div>
<div class="a" style="left:693.0px;top:219.3px;width:10.0px;height:10.6px;background:#ececec;border:1px solid;border-color:#fff #6a6a6a #6a6a6a #fff;"></div>
<div class="a" style="left:695.800px;top:223.300px;border-left:2.200px solid transparent;border-right:2.200px solid transparent;border-top:2.600px solid #000"></div>
<div class="a" style="left:174.5px;top:236.6px;width:8.3px;height:8.6px;background:#fff;border:1px solid;border-color:#7a7a7a #fff #fff #7a7a7a;"></div>
<div class="a" style="left:185.6px;top:236.4px;font-size:8.3px;line-height:8.3px;color:#222;transform:scaleX(0.854);transform-origin:0 50%"><u>F</u>olyamatos teljesítés</div>
<div class="a" style="left:268.5px;top:236.6px;width:8.5px;height:8.6px;background:#fff;border:1px solid;border-color:#7a7a7a #fff #fff #7a7a7a;"></div>
<svg class="a" style="left:270px;top:238.300px" width="6" height="6" viewBox="0 0 6 6"><path d="M.6 2.600 L2.300 4.600 L5.400 .8" fill="none" stroke="#000" stroke-width="1.300"/></svg>
<div class="a" style="left:280.6px;top:236.4px;font-size:8.3px;line-height:8.3px;color:#222;transform:scaleX(0.816);transform-origin:0 50%"><u>E</u>sedékesség számítás</div>
<div class="a" style="left:717.0px;top:184.6px;width:60.6px;height:13.6px;background:#f0f0f0;border:1px solid;border-color:#fff #707070 #707070 #fff;box-shadow:.5px .5px 0 #9a9a9a;"></div>
<div class="a" style="left:730.0px;top:187.5px;font-size:8.3px;line-height:8.3px;color:#a9a9a9;transform:scaleX(0.822);transform-origin:0 50%">Felhasznál</div>
<div class="a" style="left:717.0px;top:201.0px;width:60.6px;height:13.6px;background:#f0f0f0;border:1px solid;border-color:#fff #707070 #707070 #fff;box-shadow:.5px .5px 0 #9a9a9a;"></div>
<div class="a" style="left:741.8px;top:203.8px;font-size:8.3px;line-height:8.3px;color:#111;transform:scaleX(0.703);transform-origin:0 50%">Cím</div>
<div class="a" style="left:717.0px;top:218.0px;width:60.6px;height:13.3px;background:#f0f0f0;border:1px solid;border-color:#fff #707070 #707070 #fff;box-shadow:.5px .5px 0 #9a9a9a;"></div>
<div class="a" style="left:737.3px;top:220.9px;font-size:8.3px;line-height:8.3px;color:#a9a9a9;transform:scaleX(0.797);transform-origin:0 50%">Előleg</div>
<div class="a" style="left:717.0px;top:234.4px;width:60.6px;height:13.6px;background:#f0f0f0;border:1px solid;border-color:#fff #707070 #707070 #fff;box-shadow:.5px .5px 0 #9a9a9a;"></div>
<div class="a" style="left:726.6px;top:237.2px;font-size:8.3px;line-height:8.3px;color:#111;transform:scaleX(0.867);transform-origin:0 50%">Extra adatok</div>
<div class="a" style="left:165.5px;top:249.5px;width:756.0px;height:29.1px;background:#f1f1f1;border-right:1px solid #d6d6d6;border-bottom:1px solid #d6d6d6;"></div>
<div class="a" style="left:229.1px;top:252.0px;width:2.0px;height:25.0px;border-left:1px solid #d0d0d0;border-right:1px solid #fff;"></div>
<div class="a" style="left:283.5px;top:252.0px;width:2.0px;height:25.0px;border-left:1px solid #d0d0d0;border-right:1px solid #fff;"></div>
<div class="a" style="left:336.7px;top:252.0px;width:2.0px;height:25.0px;border-left:1px solid #d0d0d0;border-right:1px solid #fff;"></div>
<div class="a" style="left:400.7px;top:252.0px;width:2.0px;height:25.0px;border-left:1px solid #d0d0d0;border-right:1px solid #fff;"></div>
<div class="a" style="left:455.0px;top:252.0px;width:2.0px;height:25.0px;border-left:1px solid #d0d0d0;border-right:1px solid #fff;"></div>
<div class="a" style="left:509.2px;top:252.0px;width:2.0px;height:25.0px;border-left:1px solid #d0d0d0;border-right:1px solid #fff;"></div>
<div class="a" style="left:572.9px;top:252.0px;width:2.0px;height:25.0px;border-left:1px solid #d0d0d0;border-right:1px solid #fff;"></div>
<div class="a" style="left:626.8px;top:252.0px;width:2.0px;height:25.0px;border-left:1px solid #d0d0d0;border-right:1px solid #fff;"></div>
<div class="a" style="left:681.0px;top:252.0px;width:2.0px;height:25.0px;border-left:1px solid #d0d0d0;border-right:1px solid #fff;"></div>
<div class="a" style="left:181.9px;top:267.9px;font-size:8.3px;line-height:8.3px;color:#222;transform:scaleX(0.879);transform-origin:0 50%">Új (F3)</div>
<div class="a" style="left:234.8px;top:267.9px;font-size:8.3px;line-height:8.3px;color:#222;transform:scaleX(0.923);transform-origin:0 50%">Módosít (F5)</div>
<div class="a" style="left:294.5px;top:267.9px;font-size:8.3px;line-height:8.3px;color:#222;transform:scaleX(0.906);transform-origin:0 50%">Töröl (F8)</div>
<div class="a" style="left:354.8px;top:267.9px;font-size:8.3px;line-height:8.3px;color:#222;transform:scaleX(0.962);transform-origin:0 50%">Másol</div>
<div class="a" style="left:412.5px;top:267.9px;font-size:8.3px;line-height:8.3px;color:#222;transform:scaleX(0.961);transform-origin:0 50%">Vonalkód</div>
<div class="a" style="left:470.4px;top:267.9px;font-size:8.3px;line-height:8.3px;color:#222;transform:scaleX(0.888);transform-origin:0 50%">Haszon</div>
<div class="a" style="left:523.0px;top:267.9px;font-size:8.3px;line-height:8.3px;color:#222;transform:scaleX(0.880);transform-origin:0 50%">Beállítás</div>
<div class="a" style="left:592.6px;top:267.9px;font-size:8.3px;line-height:8.3px;color:#222;transform:scaleX(0.823);transform-origin:0 50%">Excel</div>
<div class="a" style="left:644.0px;top:267.9px;font-size:8.3px;line-height:8.3px;color:#222;transform:scaleX(0.898);transform-origin:0 50%">Oszlop</div>
<svg class="a" style="left:189.1px;top:255.8px" width="8" height="10" viewBox="0 0 8 10"><rect x="1" y=".8" width="6" height="8.400" rx="1" fill="#fff" stroke="#6b3d16" stroke-width="1.100"/></svg>
<svg class="a" style="left:251.0px;top:255.8px" width="11" height="10" viewBox="0 0 11 10"><rect x=".8" y="1.500" width="7.500" height="7.700" fill="#f4efe8" stroke="#6b3d16" stroke-width="1.100"/><path d="M3 4h3M3 6h2" stroke="#6b3d16" stroke-width=".8"/><path d="M4.500 7 L10 1.300" stroke="#6b3d16" stroke-width="2"/></svg>
<svg class="a" style="left:307.0px;top:255.8px" width="8" height="10" viewBox="0 0 8 10"><path d="M1 2.500h6v7h-6z M2.500 .8h3v1.500h-3z" fill="#6b3d16"/><path d="M3 5.500v2.500M5 5.500v2.500" stroke="#e8d8c8" stroke-width=".8"/></svg>
<svg class="a" style="left:360.5px;top:255.8px" width="9" height="10" viewBox="0 0 9 10"><path d="M1 3h5v6.500h-5z" fill="#f4efe8" stroke="#6b3d16" stroke-width="1.100"/><path d="M3 .8h4.500v7h-1.500v-5h-3z" fill="#6b3d16"/><path d="M2.300 5.500h2.500M2.300 7.500h2.500" stroke="#6b3d16" stroke-width=".8"/></svg>
<svg class="a" style="left:424.0px;top:257.0px" width="10" height="7.5" viewBox="0 0 10 7.5"><path d="M1 0v7.500M3.300 0v7.500M5.600 0v7.500M8.300 0v7.500" stroke="#6b3d16" stroke-width="1.600"/></svg>
<svg class="a" style="left:477.8px;top:257.8px" width="10.5" height="6" viewBox="0 0 10.5 6"><rect x=".6" y=".6" width="9.300" height="4.800" rx=".8" fill="#f4efe8" stroke="#6b3d16" stroke-width="1"/><circle cx="5.200" cy="3" r="1.300" fill="#6b3d16"/><path d="M2 3h1M7.500 3h1" stroke="#6b3d16" stroke-width=".8"/></svg>
<svg class="a" style="left:532.0px;top:255.8px" width="10.5" height="10" viewBox="0 0 10.5 10"><rect x=".8" y=".8" width="8.900" height="6.300" rx=".6" fill="#f4efe8" stroke="#6b3d16" stroke-width="1.100"/><circle cx="5.250" cy="4" r="1.500" fill="none" stroke="#6b3d16" stroke-width="1"/><path d="M4 7.500h2.500v1.300h2v1h-6.500v-1h2z" fill="#6b3d16"/></svg>
<svg class="a" style="left:596.8px;top:255.8px" width="9.5" height="9.5" viewBox="0 0 9.5 9.5"><rect x=".7" y=".7" width="8.100" height="8.100" rx=".6" fill="#f4efe8" stroke="#6b3d16" stroke-width="1.100"/><path d="M3 3l3.500 3.500M6.500 3L3 6.500" stroke="#6b3d16" stroke-width="1.100"/></svg>
<svg class="a" style="left:650.3px;top:255.8px" width="10" height="9.5" viewBox="0 0 10 9.5"><rect x=".6" y=".6" width="8.800" height="8.300" fill="#f4efe8" stroke="#6b3d16" stroke-width="1.100"/><rect x=".6" y=".6" width="8.800" height="2.200" fill="#6b3d16"/><path d="M3.600 1v8M6.500 1v8M1 5h8.500M1 7h8.500" stroke="#6b3d16" stroke-width=".7"/></svg>
<div class="a" style="left:219.3px;top:264.300px;border-left:2.400px solid transparent;border-right:2.400px solid transparent;border-top:2.800px solid #000"></div>
<div class="a" style="left:391.6px;top:264.300px;border-left:2.400px solid transparent;border-right:2.400px solid transparent;border-top:2.800px solid #000"></div>
<div class="a" style="left:563.2px;top:264.300px;border-left:2.400px solid transparent;border-right:2.400px solid transparent;border-top:2.800px solid #000"></div>
<div class="a" style="left:168.3px;top:280.3px;width:752.9px;height:139.2px;background:#f0f0f0;border-bottom:1px solid #858585;"></div>
<div class="a" style="left:168.3px;top:280.3px;width:752.9px;height:21.7px;background:#f8f8f8;border-bottom:1px solid #8a8a8a;"></div>
<div class="a" style="left:177.0px;top:302.0px;width:744.2px;height:11.6px;background:#ffffe1;border-bottom:1px solid #8a8a8a;"></div>
<div class="a" style="left:177.0px;top:313.6px;width:744.2px;height:11.2px;background:#fff;border-bottom:1px solid #6e6e6e;"></div>
<div class="a" style="left:168.3px;top:313.3px;width:8.7px;height:11.5px;background:#f0f0f0;border-left:1px solid #000;border-bottom:1px solid #000;"></div>
<div class="a" style="left:176.5px;top:280.3px;width:2.0px;height:21.7px;border-left:1px solid #4a4a4a;border-right:1px solid #fff;"></div>
<div class="a" style="left:176.5px;top:302.0px;width:1.0px;height:22.8px;background:#8a8a8a;"></div>
<div class="a" style="left:198.8px;top:280.3px;width:2.0px;height:21.7px;border-left:1px solid #4a4a4a;border-right:1px solid #fff;"></div>
<div class="a" style="left:198.8px;top:302.0px;width:1.0px;height:22.8px;background:#8a8a8a;"></div>
<div class="a" style="left:243.0px;top:280.3px;width:2.0px;height:21.7px;border-left:1px solid #4a4a4a;border-right:1px solid #fff;"></div>
<div class="a" style="left:243.0px;top:302.0px;width:1.0px;height:22.8px;background:#8a8a8a;"></div>
<div class="a" style="left:277.9px;top:280.3px;width:2.0px;height:21.7px;border-left:1px solid #4a4a4a;border-right:1px solid #fff;"></div>
<div class="a" style="left:277.9px;top:302.0px;width:1.0px;height:22.8px;background:#8a8a8a;"></div>
<div class="a" style="left:328.9px;top:280.3px;width:2.0px;height:21.7px;border-left:1px solid #4a4a4a;border-right:1px solid #fff;"></div>
<div class="a" style="left:328.9px;top:302.0px;width:1.0px;height:22.8px;background:#8a8a8a;"></div>
<div class="a" style="left:462.8px;top:280.3px;width:2.0px;height:21.7px;border-left:1px solid #4a4a4a;border-right:1px solid #fff;"></div>
<div class="a" style="left:462.8px;top:302.0px;width:1.0px;height:22.8px;background:#8a8a8a;"></div>
<div class="a" style="left:507.9px;top:280.3px;width:2.0px;height:21.7px;border-left:1px solid #4a4a4a;border-right:1px solid #fff;"></div>
<div class="a" style="left:507.9px;top:302.0px;width:1.0px;height:22.8px;background:#8a8a8a;"></div>
<div class="a" style="left:542.8px;top:280.3px;width:2.0px;height:21.7px;border-left:1px solid #4a4a4a;border-right:1px solid #fff;"></div>
<div class="a" style="left:542.8px;top:302.0px;width:1.0px;height:22.8px;background:#8a8a8a;"></div>
<div class="a" style="left:572.9px;top:280.3px;width:2.0px;height:21.7px;border-left:1px solid #4a4a4a;border-right:1px solid #fff;"></div>
<div class="a" style="left:572.9px;top:302.0px;width:1.0px;height:22.8px;background:#8a8a8a;"></div>
<div class="a" style="left:622.5px;top:280.3px;width:2.0px;height:21.7px;border-left:1px solid #4a4a4a;border-right:1px solid #fff;"></div>
<div class="a" style="left:622.5px;top:302.0px;width:1.0px;height:22.8px;background:#8a8a8a;"></div>
<div class="a" style="left:681.0px;top:280.3px;width:2.0px;height:21.7px;border-left:1px solid #4a4a4a;border-right:1px solid #fff;"></div>
<div class="a" style="left:681.0px;top:302.0px;width:1.0px;height:22.8px;background:#8a8a8a;"></div>
<div class="a" style="left:750.3px;top:280.3px;width:2.0px;height:21.7px;border-left:1px solid #4a4a4a;border-right:1px solid #fff;"></div>
<div class="a" style="left:750.3px;top:302.0px;width:1.0px;height:22.8px;background:#8a8a8a;"></div>
<div class="a" style="left:809.1px;top:280.3px;width:2.0px;height:21.7px;border-left:1px solid #4a4a4a;border-right:1px solid #fff;"></div>
<div class="a" style="left:809.1px;top:302.0px;width:1.0px;height:22.8px;background:#8a8a8a;"></div>
<div class="a" style="left:858.1px;top:280.3px;width:2.0px;height:21.7px;border-left:1px solid #4a4a4a;border-right:1px solid #fff;"></div>
<div class="a" style="left:858.1px;top:302.0px;width:1.0px;height:22.8px;background:#8a8a8a;"></div>
<div class="a" style="left:899.5px;top:280.3px;width:2.0px;height:21.7px;border-left:1px solid #4a4a4a;border-right:1px solid #fff;"></div>
<div class="a" style="left:899.5px;top:302.0px;width:1.0px;height:22.8px;background:#8a8a8a;"></div>
<div class="a" style="left:179.0px;top:287.9px;font-size:8.3px;line-height:8.3px;color:#111;font-weight:bold;transform:scaleX(1.084);transform-origin:0 50%">S.sz</div>
<div class="a" style="left:202.3px;top:282.9px;font-size:8.3px;line-height:8.3px;color:#111;font-weight:bold;transform:scaleX(0.936);transform-origin:0 50%">Van forrás</div>
<div class="a" style="left:202.3px;top:291.6px;font-size:8.3px;line-height:8.3px;color:#111;font-weight:bold;transform:scaleX(0.991);transform-origin:0 50%">biz.</div>
<div class="a" style="left:246.0px;top:287.9px;font-size:8.3px;line-height:8.3px;color:#111;font-weight:bold;transform:scaleX(0.939);transform-origin:0 50%">Kifutott</div>
<div class="a" style="left:281.0px;top:287.9px;font-size:8.3px;line-height:8.3px;color:#111;font-weight:bold;transform:scaleX(0.920);transform-origin:0 50%">Cikkszám</div>
<div class="a" style="left:332.5px;top:287.9px;font-size:8.3px;line-height:8.3px;color:#111;font-weight:bold;transform:scaleX(0.951);transform-origin:0 50%">Megnevezés</div>
<div class="a" style="left:465.8px;top:287.9px;font-size:8.3px;line-height:8.3px;color:#111;font-weight:bold;transform:scaleX(0.928);transform-origin:0 50%">Mennyiség</div>
<div class="a" style="left:511.2px;top:287.9px;font-size:8.3px;line-height:8.3px;color:#111;font-weight:bold;transform:scaleX(0.809);transform-origin:0 50%">M.E.</div>
<div class="a" style="left:545.2px;top:287.9px;font-size:8.3px;line-height:8.3px;color:#111;font-weight:bold;transform:scaleX(0.940);transform-origin:0 50%">ÁFA %</div>
<div class="a" style="left:575.8px;top:287.9px;font-size:8.3px;line-height:8.3px;color:#111;font-weight:bold;transform:scaleX(0.932);transform-origin:0 50%">Egységár-ke</div>
<div class="a" style="left:625.8px;top:287.9px;font-size:8.3px;line-height:8.3px;color:#111;font-weight:bold;transform:scaleX(0.928);transform-origin:0 50%">Nettó összeg</div>
<div class="a" style="left:683.9px;top:287.9px;font-size:8.3px;line-height:8.3px;color:#111;font-weight:bold;transform:scaleX(0.924);transform-origin:0 50%">Bruttó összeg</div>
<div class="a" style="left:753.8px;top:287.9px;font-size:8.3px;line-height:8.3px;color:#111;font-weight:bold;transform:scaleX(0.911);transform-origin:0 50%">Eng. %</div>
<div class="a" style="left:811.9px;top:282.9px;font-size:8.3px;line-height:8.3px;color:#111;font-weight:bold;transform:scaleX(0.939);transform-origin:0 50%">Receptúra</div>
<div class="a" style="left:811.9px;top:291.6px;font-size:8.3px;line-height:8.3px;color:#111;font-weight:bold;transform:scaleX(0.919);transform-origin:0 50%">azonosító</div>
<div class="a" style="left:861.0px;top:282.9px;font-size:8.3px;line-height:8.3px;color:#111;font-weight:bold;transform:scaleX(0.926);transform-origin:0 50%">Garancia</div>
<div class="a" style="left:861.0px;top:291.6px;font-size:8.3px;line-height:8.3px;color:#111;font-weight:bold;transform:scaleX(1.002);transform-origin:0 50%">lejárta</div>
<div class="a" style="left:902.6px;top:287.9px;font-size:8.3px;line-height:8.3px;color:#111;font-weight:bold;transform:scaleX(0.970);transform-origin:0 50%">Opci</div>
<div class="a" style="right:1098.0px;top:305.0px;font-size:8.3px;line-height:8.3px;color:#222;transform:scaleX(0.875);transform-origin:100% 50%">1</div>
<div class="a" style="left:281.5px;top:305.0px;font-size:8.3px;line-height:8.3px;color:#222;transform:scaleX(0.829);transform-origin:0 50%">10040008</div>
<div class="a" style="left:332.0px;top:305.0px;font-size:8.3px;line-height:8.3px;color:#222;transform:scaleX(0.847);transform-origin:0 50%">Ajándékcsomag, egyedi (személyes)</div>
<div class="a" style="right:788.7px;top:305.0px;font-size:8.3px;line-height:8.3px;color:#222;transform:scaleX(0.875);transform-origin:100% 50%">1,00</div>
<div class="a" style="left:510.3px;top:305.0px;font-size:8.3px;line-height:8.3px;color:#222;transform:scaleX(0.834);transform-origin:0 50%">db</div>
<div class="a" style="right:724.2px;top:305.0px;font-size:8.3px;line-height:8.3px;color:#222;transform:scaleX(0.875);transform-origin:100% 50%">27</div>
<div class="a" style="right:674.2px;top:305.0px;font-size:8.3px;line-height:8.3px;color:#222;transform:scaleX(0.875);transform-origin:100% 50%">1 280,00</div>
<div class="a" style="right:616.5px;top:305.0px;font-size:8.3px;line-height:8.3px;color:#222;transform:scaleX(0.875);transform-origin:100% 50%">1 280,00</div>
<div class="a" style="right:546.8px;top:305.0px;font-size:8.3px;line-height:8.3px;color:#222;transform:scaleX(0.875);transform-origin:100% 50%">1 625,60</div>
<div class="a" style="right:488.8px;top:305.0px;font-size:8.3px;line-height:8.3px;color:#222;transform:scaleX(0.875);transform-origin:100% 50%">0,00</div>
<div class="a" style="right:438.7px;top:305.0px;font-size:8.3px;line-height:8.3px;color:#222;transform:scaleX(0.875);transform-origin:100% 50%">5</div>
<div class="a" style="left:217.5px;top:304.0px;width:8.4px;height:7.8px;background:#fff;border:1px solid #c4c4c4;"></div>
<div class="a" style="left:256.5px;top:304.0px;width:8.4px;height:7.8px;background:#fff;border:1px solid #c4c4c4;"></div>
<div class="a" style="right:1098.0px;top:316.2px;font-size:8.3px;line-height:8.3px;color:#222;transform:scaleX(0.875);transform-origin:100% 50%">2</div>
<div class="a" style="left:281.5px;top:316.2px;font-size:8.3px;line-height:8.3px;color:#222;transform:scaleX(0.829);transform-origin:0 50%">10020010</div>
<div class="a" style="left:332.0px;top:316.2px;font-size:8.3px;line-height:8.3px;color:#222;transform:scaleX(0.857);transform-origin:0 50%">Ajándékcsomag, egyedi (irodai)</div>
<div class="a" style="right:788.7px;top:316.2px;font-size:8.3px;line-height:8.3px;color:#222;transform:scaleX(0.875);transform-origin:100% 50%">1,00</div>
<div class="a" style="left:510.3px;top:316.2px;font-size:8.3px;line-height:8.3px;color:#222;transform:scaleX(0.834);transform-origin:0 50%">db</div>
<div class="a" style="right:724.2px;top:316.2px;font-size:8.3px;line-height:8.3px;color:#222;transform:scaleX(0.875);transform-origin:100% 50%">27</div>
<div class="a" style="right:674.2px;top:316.2px;font-size:8.3px;line-height:8.3px;color:#222;transform:scaleX(0.875);transform-origin:100% 50%">2 520,00</div>
<div class="a" style="right:616.5px;top:316.2px;font-size:8.3px;line-height:8.3px;color:#222;transform:scaleX(0.875);transform-origin:100% 50%">2 520,00</div>
<div class="a" style="right:546.8px;top:316.2px;font-size:8.3px;line-height:8.3px;color:#222;transform:scaleX(0.875);transform-origin:100% 50%">3 200,40</div>
<div class="a" style="right:488.8px;top:316.2px;font-size:8.3px;line-height:8.3px;color:#222;transform:scaleX(0.875);transform-origin:100% 50%">0,00</div>
<div class="a" style="right:438.7px;top:316.2px;font-size:8.3px;line-height:8.3px;color:#222;transform:scaleX(0.875);transform-origin:100% 50%">7</div>
<div class="a" style="left:217.5px;top:315.3px;width:8.4px;height:7.8px;background:#fff;border:1px solid #c4c4c4;"></div>
<div class="a" style="left:256.5px;top:315.3px;width:8.4px;height:7.8px;background:#fff;border:1px solid #c4c4c4;"></div>
<div class="a" style="left:168.3px;top:406.0px;width:752.9px;height:12.0px;background:#f1f1f1;"></div>
<div class="a" style="left:180.0px;top:407.0px;width:11.0px;height:9.4px;background:#cdcdcd;"></div>
<svg class="a" style="left:172px;top:409px" width="5" height="6" viewBox="0 0 5 6"><path d="M4.200 .5 L1 3 L4.200 5.500" fill="none" stroke="#777" stroke-width="1.100"/></svg>
<svg class="a" style="left:913px;top:409px" width="5" height="6" viewBox="0 0 5 6"><path d="M.8 .5 L4 3 L.8 5.500" fill="none" stroke="#555" stroke-width="1.100"/></svg>
<div class="a" style="left:169.0px;top:420.2px;width:752.2px;height:8.4px;border-left:1px solid #8a8a8a;border-bottom:1px solid #fff;"></div>
<div class="a" style="left:170.8px;top:420.0px;font-size:8.3px;line-height:8.3px;color:#222;transform:scaleX(0.883);transform-origin:0 50%">Megjelenített sor=2 | Mennyiség=2,00 | Súly (kg)=0 | Felhasználható=0,00</div>
<div class="a" style="left:168.3px;top:444.5px;width:406.5px;height:57.7px;border:1px solid;border-color:transparent #6e6e6e #6e6e6e #fff;"></div>
<div class="a" style="left:174.8px;top:434.9px;font-size:8.3px;line-height:8.3px;color:#111;transform:scaleX(0.851);transform-origin:0 50%">Megjegyzés</div>
<div class="a" style="left:220.3px;top:434.9px;font-size:8.3px;line-height:8.3px;color:#111;transform:scaleX(0.872);transform-origin:0 50%">Tárgy</div>
<div class="a" style="left:247.8px;top:434.9px;font-size:8.3px;line-height:8.3px;color:#a9a9a9;transform:scaleX(0.856);transform-origin:0 50%">Ügynök</div>
<div class="a" style="left:281.0px;top:434.9px;font-size:8.3px;line-height:8.3px;color:#111;transform:scaleX(0.867);transform-origin:0 50%">Kapcsolattartó</div>
<div class="a" style="left:337.6px;top:434.9px;font-size:8.3px;line-height:8.3px;color:#111;transform:scaleX(0.799);transform-origin:0 50%">Bankszámla</div>
<div class="a" style="left:216.1px;top:433.0px;width:1.0px;height:12.0px;background:#444;"></div>
<div class="a" style="left:243.0px;top:433.0px;width:1.0px;height:12.0px;background:#444;"></div>
<div class="a" style="left:275.8px;top:433.0px;width:1.0px;height:12.0px;background:#444;"></div>
<div class="a" style="left:331.1px;top:433.0px;width:1.0px;height:12.0px;background:#444;"></div>
<div class="a" style="left:376.5px;top:433.0px;width:1.0px;height:12.0px;background:#444;"></div>
<div class="a" style="left:173.4px;top:443.9px;font-size:6.6px;line-height:6.6px;color:#3434d8;transform:scaleX(0.956);transform-origin:0 50%">Szövegtár [F2]</div>
<div class="a" style="left:173.4px;top:452.5px;width:395.4px;height:43.7px;background:#f0f0f0;border:1px solid;border-color:#7a7a7a #fff #fff #7a7a7a;"></div>
<div class="a" style="left:174.4px;top:453.5px;width:383.6px;height:41.7px;background:#ffffc3;"></div>
<svg class="a" style="left:560px;top:457px" width="6" height="4" viewBox="0 0 6 4"><path d="M.5 3.500 L3 .8 L5.500 3.500" fill="none" stroke="#b8b8b8" stroke-width="1"/></svg>
<svg class="a" style="left:560px;top:488px" width="6" height="4" viewBox="0 0 6 4"><path d="M.5 .5 L3 3.200 L5.500 .5" fill="none" stroke="#b8b8b8" stroke-width="1"/></svg>
<div class="a" style="left:581.2px;top:446.6px;width:192.1px;height:54.6px;background:#ffffc3;border:1px solid #8a8a8a;"></div>
<div class="a" style="left:581.2px;top:446.6px;width:43.4px;height:54.6px;background:#c0c0c0;border:1px solid #8a8a8a;"></div>
<div class="a" style="left:581.2px;top:461.6px;width:192.1px;height:1.0px;background:#8a8a8a;"></div>
<div class="a" style="left:581.2px;top:477.3px;width:192.1px;height:1.0px;background:#8a8a8a;"></div>
<div class="a" style="left:584.0px;top:448.9px;font-size:8.3px;line-height:8.3px;color:#222;transform:scaleX(1.008);transform-origin:0 50%">Nettó</div>
<div class="a" style="left:584.0px;top:464.2px;font-size:8.3px;line-height:8.3px;color:#222;transform:scaleX(0.978);transform-origin:0 50%">Áfa</div>
<div class="a" style="left:586.4px;top:484.0px;font-size:8.3px;line-height:8.3px;color:#111;font-weight:bold;transform:scaleX(1.069);transform-origin:0 50%">Bruttó</div>
<div class="a" style="left:710.3px;top:449.1px;font-size:10.8px;line-height:10.8px;color:#111;font-weight:bold;transform:scaleX(1.138);transform-origin:0 50%">3 800 HUF</div>
<div class="a" style="left:710.3px;top:464.3px;font-size:10.8px;line-height:10.8px;color:#111;font-weight:bold;transform:scaleX(1.138);transform-origin:0 50%">1 026 HUF</div>
<div class="a" style="left:686.6px;top:479.4px;font-size:16.2px;line-height:16.2px;color:#111;font-weight:bold;transform:scaleX(1.048);transform-origin:0 50%">4 826 HUF</div>
<div class="a" style="left:165.6px;top:505.6px;width:218.9px;height:12.0px;border:1px solid;border-color:#bdbdbd #fff #fff #bdbdbd;"></div>
<div class="a" style="left:387.5px;top:505.6px;width:107.9px;height:12.0px;border:1px solid;border-color:#bdbdbd #fff #fff #bdbdbd;"></div>
<div class="a" style="left:497.7px;top:505.6px;width:205.6px;height:12.0px;border:1px solid;border-color:#bdbdbd #fff #fff #bdbdbd;"></div>
<div class="a" style="left:705.5px;top:505.6px;width:206.0px;height:12.0px;border:1px solid;border-color:#bdbdbd #fff #fff #bdbdbd;"></div>
<div class="a" style="left:167.4px;top:508.2px;font-size:8.3px;line-height:8.3px;color:#222;transform:scaleX(0.878);transform-origin:0 50%">Készítve: 2017.01.09. 8:39:45 (Adminisztrátor)</div>
<div class="a" style="left:389.0px;top:508.2px;font-size:8.3px;line-height:8.3px;color:#222;transform:scaleX(0.888);transform-origin:0 50%">Nyomtatva: 0 pld.</div>
<div class="a" style="left:499.7px;top:508.2px;font-size:8.3px;line-height:8.3px;color:#222;transform:scaleX(0.909);transform-origin:0 50%">Nyitott (nem kifutott)</div>
<svg class="a" style="left:916.500px;top:510.500px" width="7" height="7" viewBox="0 0 7 7"><path d="M6.500 .5 L.5 6.500 M6.500 3 L3 6.500 M6.500 5.300 L5.300 6.500" stroke="#b0b0b0" stroke-width="1"/></svg>
<div class="a" style="left:165.5px;top:519.0px;width:211.0px;height:23.3px;background:#f1f1f1;"></div>
<div class="a" style="left:223.1px;top:520.0px;width:2.0px;height:22.0px;border-left:1px solid #d0d0d0;border-right:1px solid #fff;"></div>
<div class="a" style="left:274.0px;top:520.0px;width:2.0px;height:22.0px;border-left:1px solid #d0d0d0;border-right:1px solid #fff;"></div>
<div class="a" style="left:324.1px;top:520.0px;width:2.0px;height:22.0px;border-left:1px solid #d0d0d0;border-right:1px solid #fff;"></div>
<div class="a" style="left:375.7px;top:520.0px;width:2.0px;height:22.0px;border-left:1px solid #d0d0d0;border-right:1px solid #fff;"></div>
<div class="a" style="left:168.3px;top:533.0px;font-size:8.3px;line-height:8.3px;color:#222;transform:scaleX(0.920);transform-origin:0 50%">Ment, bezár</div>
<div class="a" style="left:234.8px;top:533.0px;font-size:8.3px;line-height:8.3px;color:#222;transform:scaleX(0.882);transform-origin:0 50%">Előnézet</div>
<div class="a" style="left:285.8px;top:533.0px;font-size:8.3px;line-height:8.3px;color:#222;transform:scaleX(0.874);transform-origin:0 50%">Csatolás</div>
<div class="a" style="left:333.0px;top:533.0px;font-size:8.3px;line-height:8.3px;color:#222;transform:scaleX(0.831);transform-origin:0 50%">Bezár (Esc)</div>
<svg class="a" style="left:183.7px;top:521.2px" width="10" height="10" viewBox="0 0 10 10"><path d="M.8 .8h7l1.500 1.500v7h-8.500z" fill="#6b3d16"/><rect x="2.500" y="1.500" width="4.500" height="2.500" fill="#f4efe8"/><rect x="2.300" y="5.500" width="5.400" height="3.800" fill="#f4efe8"/><path d="M3.500 6.300l3 2.500M6.500 6.300l-3 2.500" stroke="#6b3d16" stroke-width=".9"/></svg>
<svg class="a" style="left:244.0px;top:521.2px" width="10" height="10" viewBox="0 0 10 10"><rect x=".8" y=".8" width="6.500" height="8" fill="#f4efe8" stroke="#6b3d16" stroke-width="1"/><path d="M2.300 3h3.500M2.300 5h2" stroke="#6b3d16" stroke-width=".7"/><circle cx="5.800" cy="5.800" r="2.200" fill="#f4efe8" stroke="#6b3d16" stroke-width="1"/><path d="M7.500 7.500L9.500 9.500" stroke="#6b3d16" stroke-width="1.400"/></svg>
<svg class="a" style="left:294.5px;top:521.5px" width="11" height="9" viewBox="0 0 11 9"><path d="M2 7 L7.500 2 a1.600 1.600 0 0 1 2.200 2.200 L5 8.200" fill="none" stroke="#6b3d16" stroke-width="2.200" stroke-linecap="round"/><path d="M2.500 6.800 L7.800 2.300" stroke="#f1f1f1" stroke-width=".6"/></svg>
<svg class="a" style="left:345.8px;top:521.5px" width="10" height="9" viewBox="0 0 10 9"><path d="M1 1 L9 8 M9 1 L1 8" stroke="#f0920c" stroke-width="2.400"/></svg>
<div class="a" style="left:213.600px;top:529.800px;border-left:2.300px solid transparent;border-right:2.300px solid transparent;border-top:2.600px solid #000"></div>
<div class="a" style="left:800.7px;top:522.5px;width:7.1px;height:7.0px;background:#fff;border:1px solid;border-color:#7a7a7a #fff #fff #7a7a7a;"></div>
<div class="a" style="left:811.9px;top:522.3px;font-size:8.3px;line-height:8.3px;color:#222;transform:scaleX(0.851);transform-origin:0 50%"><u>M</u>entés ideiglenes bizonylatként</div>
<div class="a" style="left:170.2px;top:542.5px;width:704.6px;height:71.2px;background:#c0c0c0;"></div>
<div class="a" style="left:175.8px;top:543.2px;width:127.0px;height:1.0px;background:#555;"></div>
<div class="a" style="left:370.2px;top:543.2px;width:125.2px;height:1.0px;background:#555;"></div>
<svg class="a" style="left:164px;top:552px" width="717" height="63" viewBox="0 0 717 63"><rect x="1.200" y="1.200" width="713.800" height="60.600" fill="none" stroke="#5a5a5a" stroke-width="1" stroke-dasharray="2.800 2.900"/></svg>
<div class="a" style="left:472.5px;top:546.0px;width:99.5px;height:13.0px;background:#c0c0c0;"></div>
<div class="a" style="left:474.7px;top:546.6px;font-size:12.4px;line-height:12.4px;color:#505050;font-weight:bold;transform:scaleX(0.964);transform-origin:0 50%">Előleg, proforma</div>
<div class="a" style="left:175.8px;top:560.3px;width:126.7px;height:20.7px;background:#f0f0f0;border:1px solid;border-color:#fff #6a6a6a #6a6a6a #fff;box-shadow:1px 1px 0 #8a8a8a;"></div>
<div class="a" style="left:175.8px;top:587.2px;width:126.7px;height:20.4px;background:#f0f0f0;border:1px solid;border-color:#fff #6a6a6a #6a6a6a #fff;box-shadow:1px 1px 0 #8a8a8a;"></div>
<div class="a" style="left:370.2px;top:560.3px;width:125.2px;height:20.7px;background:#f0f0f0;border:1px solid;border-color:#fff #6a6a6a #6a6a6a #fff;box-shadow:1px 1px 0 #8a8a8a;"></div>
<div class="a" style="left:370.2px;top:587.2px;width:125.2px;height:20.4px;background:#f0f0f0;border:1px solid;border-color:#fff #6a6a6a #6a6a6a #fff;box-shadow:1px 1px 0 #8a8a8a;"></div>
<div class="a" style="left:552.3px;top:560.3px;width:125.0px;height:20.7px;background:#f0f0f0;border:1px solid;border-color:#fff #6a6a6a #6a6a6a #fff;box-shadow:1px 1px 0 #8a8a8a;"></div>
<div class="a" style="left:552.3px;top:587.2px;width:125.0px;height:20.4px;background:#f0f0f0;border:1px solid;border-color:#fff #6a6a6a #6a6a6a #fff;box-shadow:1px 1px 0 #8a8a8a;"></div>
<div class="a" style="left:742.3px;top:560.3px;width:125.2px;height:20.7px;background:#f0f0f0;border:1px solid;border-color:#fff #6a6a6a #6a6a6a #fff;box-shadow:1px 1px 0 #8a8a8a;"></div>
<div class="a" style="left:742.3px;top:587.2px;width:125.2px;height:20.4px;background:#f0f0f0;border:1px solid;border-color:#fff #6a6a6a #6a6a6a #fff;box-shadow:1px 1px 0 #8a8a8a;"></div>
<div class="a" style="left:197.7px;top:565.8px;font-size:11.2px;line-height:11.2px;color:#111;transform:scaleX(0.892);transform-origin:0 50%">Előlegbekérő levél</div>
<div class="a" style="left:209.2px;top:591.9px;font-size:11.2px;line-height:11.2px;color:#111;transform:scaleX(0.857);transform-origin:0 50%">Előleg számla</div>
<div class="a" style="left:377.0px;top:565.8px;font-size:11.2px;line-height:11.2px;color:#111;transform:scaleX(0.921);transform-origin:0 50%">Előlegbekérő kifuttatása</div>
<div class="a" style="left:400.8px;top:591.9px;font-size:11.2px;line-height:11.2px;color:#111;transform:scaleX(0.890);transform-origin:0 50%">Előleg sztornó</div>
<div class="a" style="left:593.4px;top:565.8px;font-size:11.2px;line-height:11.2px;color:#111;transform:scaleX(0.900);transform-origin:0 50%">Proforma</div>
<div class="a" style="left:577.7px;top:591.9px;font-size:11.2px;line-height:11.2px;color:#111;font-style:italic;transform:scaleX(0.907);transform-origin:0 50%">Proforma kereső</div>
<div class="a" style="left:759.0px;top:565.8px;font-size:11.2px;line-height:11.2px;color:#111;font-style:italic;transform:scaleX(0.892);transform-origin:0 50%">Előlegbekérő kereső</div>
<div class="a" style="left:760.0px;top:591.9px;font-size:11.2px;line-height:11.2px;color:#111;font-style:italic;transform:scaleX(0.872);transform-origin:0 50%">Előlegszámla kereső</div>
<div class="a" style="left:302.5px;top:570.0px;width:67.7px;height:2.5px;background:#1515a0;"></div>
<div class="a" style="left:302.5px;top:595.7px;width:67.7px;height:2.5px;background:#1515a0;"></div>
<div class="a" style="left:225.0px;top:581.8px;width:1.9px;height:5.4px;background:#1515a0;"></div>
<svg class="a" style="left:668px;top:550px" width="20" height="20" viewBox="668 550 20 20"><path d="M670 567.400 L670 555.600 L673.600 552.500 L674.700 557.700 L682.400 551.700 L685.900 553.300 L679.700 562 L685.100 563.100 L681.600 567.400 Z" fill="#f80808"/></svg>
<!-- STATUS -->
<div class="a" style="left:0;top:709px;width:1296px;height:2px;background:#fbfbfb"></div>
<div id="status" class="a">
  <div class="sp" style="left:1px;width:532px"></div>
  <div class="sp" style="left:535px;width:126px"><span>ACTUAL bemutató cég</span></div>
  <div class="sp" style="left:663px;width:188px"></div>
  <div class="sp" style="left:853px;width:187px"><span>\ACTUAL.Kronos0001 (2.1.61) RTM</span></div>
  <div class="sp" style="left:1042px;width:112px"><span>Adminisztrátor</span></div>
  <div class="sp" style="left:1157.5px;width:74px;padding-left:9px"><span>2017.01.09.</span></div>
  <div class="sp" style="left:1234px;width:43px;padding-left:11px"><span>8:42</span></div>
</div>
<div id="botline" class="a"></div>
<div class="a" style="left:49px;top:727px;width:55.600px;height:1px;background:#ece8df"></div>
<div class="a" style="left:107.400px;top:727px;width:55.600px;height:1px;background:#ece8df"></div>
<div class="a" style="left:166px;top:727px;width:56px;height:1px;background:#fbfbf8"></div>
</body></html>
